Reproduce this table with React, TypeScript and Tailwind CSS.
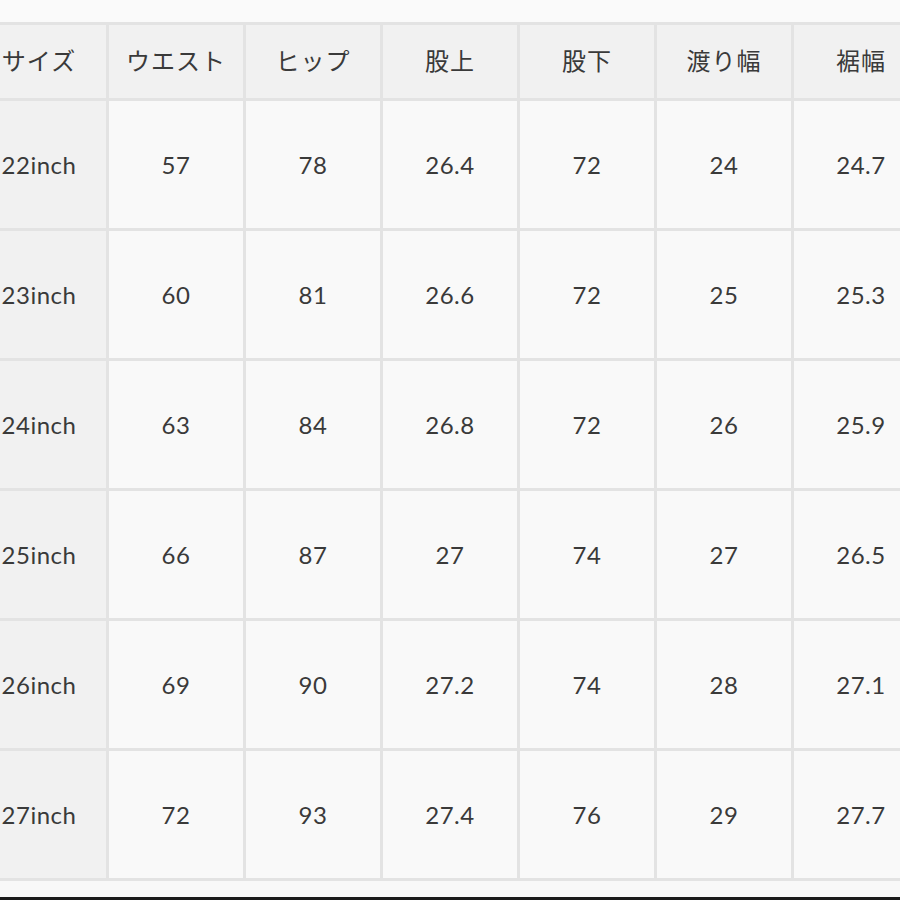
import React from "react";

const headers = ["サイズ", "ウエスト", "ヒップ", "股上", "股下", "渡り幅", "裾幅"];
const rows = [
  ["22inch", "57", "78", "26.4", "72", "24", "24.7"],
  ["23inch", "60", "81", "26.6", "72", "25", "25.3"],
  ["24inch", "63", "84", "26.8", "72", "26", "25.9"],
  ["25inch", "66", "87", "27", "74", "27", "26.5"],
  ["26inch", "69", "90", "27.2", "74", "28", "27.1"],
  ["27inch", "72", "93", "27.4", "76", "29", "27.7"],
];

export default function App() {
  return (
    <div className="w-[900px] h-[900px] overflow-hidden bg-[#fafafa] flex flex-col">
      <div className="h-[22px] shrink-0" />
      <div className="ml-[-31px] w-[965px] shrink-0 bg-[#e3e3e3] p-[3px] grid grid-cols-[repeat(7,134px)] grid-rows-[73px_repeat(6,127px)] gap-[3px] text-[#3a3a3a] font-['Lato','Noto_Sans_CJK_JP',sans-serif]">
        {headers.map((h) => (
          <div
            key={h}
            className="bg-[#f1f1f1] flex items-center justify-center pb-[3px] text-[24px] font-['Noto_Sans_CJK_JP',sans-serif] tracking-[1px]"
          >
            {h}
          </div>
        ))}
        {rows.map((r) =>
          r.map((c, i) => (
            <div
              key={r[0] + i}
              className={
                (i === 0 ? "bg-[#f1f1f1]" : "bg-[#f9f9f9]") +
                " flex items-center justify-center text-[24px] tracking-[0.5px]"
              }
            >
              {c}
            </div>
          ))
        )}
      </div>
      <div className="flex-1 bg-[#f8f8f8]" />
      <div className="h-[3px] shrink-0 bg-[#1a1a1a]" />
    </div>
  );
}
